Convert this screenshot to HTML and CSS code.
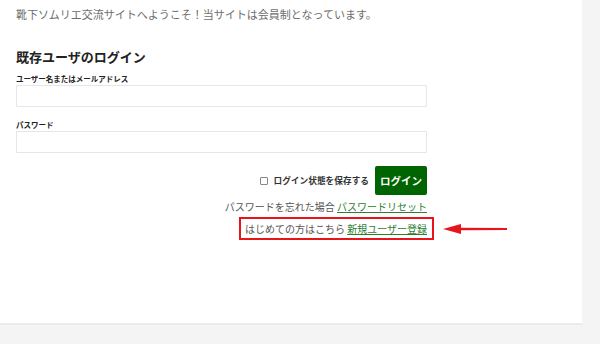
FILE: index.html
```html
<!DOCTYPE html>
<html lang="ja">
<head>
  <meta charset="UTF-8">
  <title>ログイン</title>
  <link rel="stylesheet" href="styles.css">
</head>
<body>

  <div class="page">
    <p class="intro">靴下ソムリエ交流サイトへようこそ！当サイトは会員制となっています。</p>

    <h2 class="title">既存ユーザのログイン</h2>

    <form class="login-form" onsubmit="return false">
      <label for="user" class="field-label">ユーザー名またはメールアドレス</label>
      <input type="text" id="user" name="user" class="field">

      <label for="pass" class="field-label second">パスワード</label>
      <input type="password" id="pass" name="pass" class="field">

      <div class="submit-row">
        <label class="remember">
          <input type="checkbox" name="remember" class="check">
          ログイン状態を保存する
        </label>
        <button type="submit" class="login-btn">ログイン</button>
      </div>

      <p class="forgot">パスワードを忘れた場合 <a href="#">パスワードリセット</a></p>

      <div class="register-row">
        <div class="register-box">
          はじめての方はこちら <a href="#">新規ユーザー登録</a>
          <!-- annotation arrow -->
          <svg class="arrow" width="66" height="12" viewBox="0 0 66 12">
            <path d="M0 6 L18 1 L18 4.8 L64 5 L64 7 L18 7.2 L18 11 Z" fill="#e8141c"/>
          </svg>
        </div>
      </div>
    </form>
  </div>

</body>
</html>
```

FILE: styles.css
```css
body {
  margin: 0;
  padding: 0;
  background-color: #f4f4f4;
  font-family: "Noto Sans CJK JP", "Noto Sans", sans-serif;
  color: #555;
}

.page {
  width: 582px;
  height: 325px;
  box-sizing: border-box;
  background-color: #fff;
  border-bottom: 2px solid #ebebeb;
  padding: 6px 16px 0;
}

.intro {
  margin: 0;
  font-size: 11px;
  line-height: 16px;
  color: #6e6e6e;
}

.title {
  margin: 25px 0 0;
  font-size: 13px;
  line-height: 20px;
  font-weight: bold;
  color: #222;
}

.login-form {
  width: 411px;
}

.field-label {
  display: block;
  margin-top: 6px;
  font-size: 7.5px;
  line-height: 12px;
  font-weight: bold;
  color: #222;
}

.field-label.second {
  margin-top: 12px;
}

.field {
  display: block;
  width: 100%;
  height: 22px;
  box-sizing: border-box;
  margin: 0;
  border: 1px solid #e6e6e6;
  border-radius: 1px;
  background: #fff;
}

.submit-row {
  display: flex;
  justify-content: flex-end;
  align-items: center;
  gap: 6px;
  margin-top: 13px;
}

.remember {
  display: flex;
  align-items: center;
  gap: 3px;
  font-size: 8.7px;
  font-weight: bold;
  color: #333;
}

.check {
  appearance: none;
  width: 8px;
  height: 8px;
  margin: 0 2px 0 0;
  border: 1px solid #888;
  border-radius: 1px;
  background: #fff;
}

.login-btn {
  height: 29px;
  padding: 0 5px;
  border: none;
  border-radius: 2px;
  background-color: #006400;
  color: #fff;
  font-family: inherit;
  font-size: 10.5px;
  font-weight: bold;
}

.forgot {
  margin: 4px 0 0;
  text-align: right;
  font-size: 10px;
  line-height: 16px;
  color: #555;
}

a {
  color: #2e7d32;
  text-decoration: underline;
}

.register-row {
  display: flex;
  justify-content: flex-end;
  margin-top: 2px;
  margin-right: -7px;
}

.register-box {
  position: relative;
  border: 2px solid #e8141c;
  padding: 2px 5px 1px 4px;
  font-size: 10px;
  line-height: 16px;
  color: #555;
}

.arrow {
  position: absolute;
  left: calc(100% + 11px);
  top: 4px;
}
```
